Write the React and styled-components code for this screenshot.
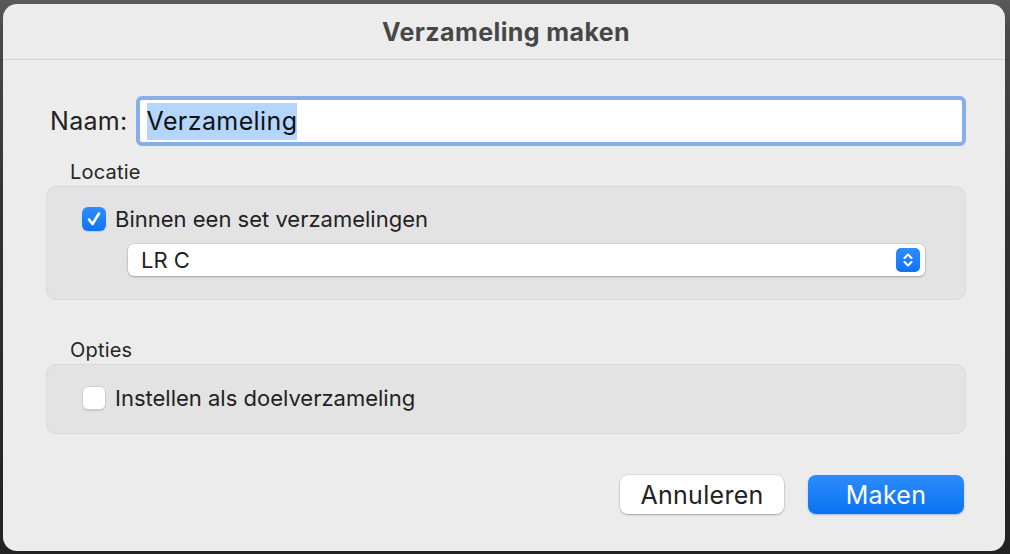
import React from 'react';
import styled, { createGlobalStyle } from 'styled-components';

const GlobalStyle = createGlobalStyle`
  html, body {
    margin: 0;
    padding: 0;
    background: #2b2b2b;
  }
  body {
    font-family: Inter, "Noto Sans", "Liberation Sans", sans-serif;
    color: #222;
  }
`;

const Page = styled.div`
  width: 1010px;
  height: 554px;
  box-sizing: border-box;
  padding: 4px 5px 3px 3px;
  background: linear-gradient(#5a5a5a 0px, #4a4a4a 30px, #333 200px, #222 554px);
  display: flex;
`;

const Dialog = styled.div`
  flex: 1;
  background: #ececec;
  border-radius: 14px;
  display: flex;
  flex-direction: column;
  overflow: hidden;
`;

const TitleBar = styled.div`
  height: 55px;
  border-bottom: 1px solid #d4d4d4;
  display: flex;
  align-items: center;
  justify-content: center;
  font-size: 25px;
  font-weight: 700;
  letter-spacing: 0.4px;
  color: #474747;
  padding-left: 4px;
`;

const Body = styled.div`
  flex: 1;
  display: flex;
  flex-direction: column;
  padding: 36px 39px 37px 43px;
`;

const NameRow = styled.div`
  display: flex;
  align-items: center;
  gap: 8px;
`;

const NameLabel = styled.label`
  font-size: 25px;
  letter-spacing: 0.3px;
  margin-left: 4px;
  color: #222;
`;

const NameInput = styled.div`
  flex: 1;
  height: 42px;
  background: #fff;
  border: 4px solid #86aeea;
  border-radius: 6px;
  display: flex;
  align-items: center;
  padding-left: 7px;
  font-size: 25px;
  letter-spacing: 0.4px;
  color: #111;
`;

const Selection = styled.span`
  background: #b4d6fd;
  padding: 3px 0 4px;
`;

const SectionLabel = styled.div`
  font-size: 20px;
  letter-spacing: 0.2px;
  color: #262626;
  margin: ${p => p.$top}px 0 2px 24px;
  line-height: 24px;
`;

const Group = styled.div`
  background: #e3e3e3;
  border: 1px solid #dadada;
  border-radius: 10px;
  padding: ${p => p.$pad};
  display: flex;
  flex-direction: column;
`;

const CheckRow = styled.div`
  display: flex;
  align-items: center;
  gap: 9px;
  font-size: 22px;
  color: #222;
`;

const Box = styled.div`
  width: 24px;
  height: 24px;
  box-sizing: border-box;
  border-radius: 6px;
  display: flex;
  align-items: center;
  justify-content: center;
  background: ${p => (p.$checked ? 'linear-gradient(#2f8cfb, #0f74f4)' : '#fff')};
  border: ${p => (p.$checked ? 'none' : '1px solid #cfcfcf')};
  box-shadow: 0 1px 1px rgba(0, 0, 0, 0.12);
`;

const Select = styled.div`
  margin: 12px 0 0 46px;
  height: 32px;
  background: #fff;
  border-radius: 6px;
  box-shadow: 0 0 0 0.5px rgba(0, 0, 0, 0.12), 0 1px 2px rgba(0, 0, 0, 0.25);
  display: flex;
  align-items: center;
  justify-content: space-between;
  padding: 0 5px 0 13px;
  font-size: 22px;
  color: #222;
`;

const Stepper = styled.div`
  width: 24px;
  height: 24px;
  border-radius: 5px;
  background: linear-gradient(#2f8cfb, #0f74f4);
  display: flex;
  align-items: center;
  justify-content: center;
`;

const Footer = styled.div`
  margin-top: auto;
  display: flex;
  justify-content: flex-end;
  gap: 24px;
  padding-right: 2px;
`;

const Button = styled.button`
  width: ${p => p.$w}px;
  height: 39px;
  border-radius: 8px;
  border: none;
  font-family: inherit;
  font-size: 25px;
  letter-spacing: 0.3px;
  display: flex;
  align-items: center;
  justify-content: center;
  background: ${p => (p.$primary ? 'linear-gradient(#2c8cfa, #0a72f3)' : '#fff')};
  color: ${p => (p.$primary ? '#fff' : '#222')};
  box-shadow: ${p => (p.$primary
    ? '0 1px 2px rgba(0, 80, 200, 0.3)'
    : '0 0 0 0.5px rgba(0, 0, 0, 0.12), 0 1px 2px rgba(0, 0, 0, 0.25)')};
`;

const Check = () => (
  <svg width="16" height="18" viewBox="0 0 16 18">
    <path d="M3 9.5 L6.5 14 L13 3.5" fill="none" stroke="#fff" strokeWidth="2.6" strokeLinecap="round" strokeLinejoin="round" />
  </svg>
);

const Chevrons = () => (
  <svg width="14" height="20" viewBox="0 0 14 20">
    <path d="M3.5 8 L7 4.5 L10.5 8 M3.5 12 L7 15.5 L10.5 12" fill="none" stroke="#fff" strokeWidth="2" strokeLinecap="round" strokeLinejoin="round" />
  </svg>
);

export default function App() {
  return (
    <>
      <GlobalStyle />
      <Page>
        <Dialog>
          <TitleBar>Verzameling maken</TitleBar>
          <Body>
            <NameRow>
              <NameLabel>Naam:</NameLabel>
              <NameInput><Selection>Verzameling</Selection></NameInput>
            </NameRow>
            <SectionLabel $top={14}>Locatie</SectionLabel>
            <Group $pad="19px 40px 23px 35px">
              <CheckRow>
                <Box $checked><Check /></Box>
                Binnen een set verzamelingen
              </CheckRow>
              <Select>
                LR C
                <Stepper><Chevrons /></Stepper>
              </Select>
            </Group>
            <SectionLabel $top={38}>Opties</SectionLabel>
            <Group $pad="20px 40px 22px 35px">
              <CheckRow>
                <Box />
                Instellen als doelverzameling
              </CheckRow>
            </Group>
            <Footer>
              <Button $w={164}>Annuleren</Button>
              <Button $primary $w={156}>Maken</Button>
            </Footer>
          </Body>
        </Dialog>
      </Page>
    </>
  );
}
